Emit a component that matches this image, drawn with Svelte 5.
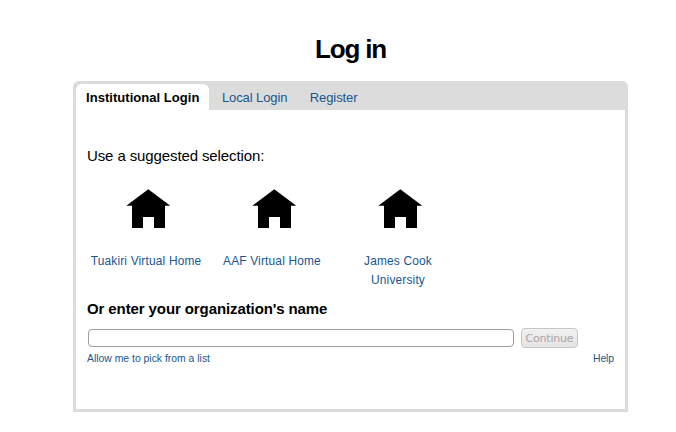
<script>
  const tabs = ['Institutional Login', 'Local Login', 'Register'];
  const suggestions = ['Tuakiri Virtual Home', 'AAF Virtual Home', 'James Cook University'];
  let active = $state(0);
  let name = $state('');
</script>

<main>
  <h1>Log in</h1>
  <section class="panel">
    <nav>
      {#each tabs as tab, i}
        <button class="tab" class:active={active === i} onclick={() => (active = i)}>{tab}</button>
      {/each}
    </nav>
    <div class="content">
      <p class="lead">Use a suggested selection:</p>
      <div class="choices">
        {#each suggestions as item}
          <a class="choice" href="#select">
            <svg width="46" height="40" viewBox="0 0 46 40" aria-hidden="true">
              <path d="M23.3 0.3 45.3 16.7H40V39H29V28H18V39H7V16.7H1.3Z" />
            </svg>
            <span>{item}</span>
          </a>
        {/each}
      </div>
      <h2>Or enter your organization's name</h2>
      <div class="entry">
        <input type="text" aria-label="Organization" bind:value={name} />
        <button class="continue" disabled={!name}>Continue</button>
      </div>
      <div class="links">
        <a href="#list">Allow me to pick from a list</a>
        <a href="#help">Help</a>
      </div>
    </div>
  </section>
</main>

<style>
  :global(body) {
    background: #fff;
    overflow: hidden;
  }
  main {
    box-sizing: border-box;
    width: 676px;
    height: 432px;
    padding: 34px 0 0 73px;
    font-family: 'Liberation Sans', Arial, sans-serif;
    color: #000;
  }
  h1 {
    width: 555px;
    height: 47px;
    margin: 0;
    font-size: 26px;
    line-height: 30px;
    letter-spacing: -1.15px;
    text-align: center;
  }
  .panel {
    box-sizing: border-box;
    width: 555px;
    height: 331px;
    border: 3px solid #dcdcdc;
    border-radius: 6px 6px 0 0;
  }
  nav {
    display: flex;
    height: 26px;
    background: #dcdcdc;
  }
  .tab {
    height: 26px;
    margin: 0;
    padding: 1px 10px 0;
    border: 0;
    border-radius: 6px 6px 0 0;
    background: transparent;
    color: #16578f;
    font: 13px/25px 'Liberation Sans', Arial, sans-serif;
    letter-spacing: -0.1px;
    white-space: nowrap;
  }
  .tab + .tab {
    margin-left: 2.5px;
  }
  .active {
    background: #fff;
    color: #000;
    font-weight: bold;
    letter-spacing: 0.04px;
  }
  .content {
    padding: 37px 11px 0;
  }
  .lead {
    margin: 0;
    font-size: 15px;
    line-height: 18px;
    letter-spacing: -0.11px;
  }
  .choices {
    display: flex;
    height: 135px;
    padding-top: 24px;
    box-sizing: border-box;
  }
  a {
    color: #16578f;
    text-decoration: none;
  }
  .choice {
    display: flex;
    flex-direction: column;
    align-items: center;
    width: 118px;
    margin-right: 8px;
    font-size: 11.9px;
    line-height: 19px;
    text-align: center;
  }
  .choice svg {
    margin: 0 0 23px 4px;
  }
  .choice span {
    width: 114px;
    letter-spacing: 0.18px;
  }
  h2 {
    margin: 0;
    font-size: 15px;
    line-height: 18px;
    letter-spacing: -0.1px;
  }
  .entry {
    display: flex;
    align-items: center;
    height: 20px;
    margin-top: 10px;
    padding-left: 1px;
  }
  input {
    box-sizing: border-box;
    width: 426px;
    height: 18px;
    margin: 0 7px 0 0;
    padding: 0 4px;
    border: 1px solid #a09c98;
    border-radius: 4px;
    background: #fff;
    outline: none;
  }
  .continue {
    box-sizing: border-box;
    width: 57px;
    height: 20px;
    margin: 0;
    padding: 0;
    border: 1px solid #c5c5c5;
    border-radius: 4px;
    background: linear-gradient(#f1f1f1, #e4e4e4);
    color: #a8a6a4;
    font: 11px/17px 'DejaVu Sans', sans-serif;
    letter-spacing: -0.2px;
  }
  .links {
    display: flex;
    justify-content: space-between;
    margin-top: 5px;
    font-size: 10.4px;
    line-height: 12px;
  }
  .links a:last-child {
    letter-spacing: -0.1px;
  }
</style>
